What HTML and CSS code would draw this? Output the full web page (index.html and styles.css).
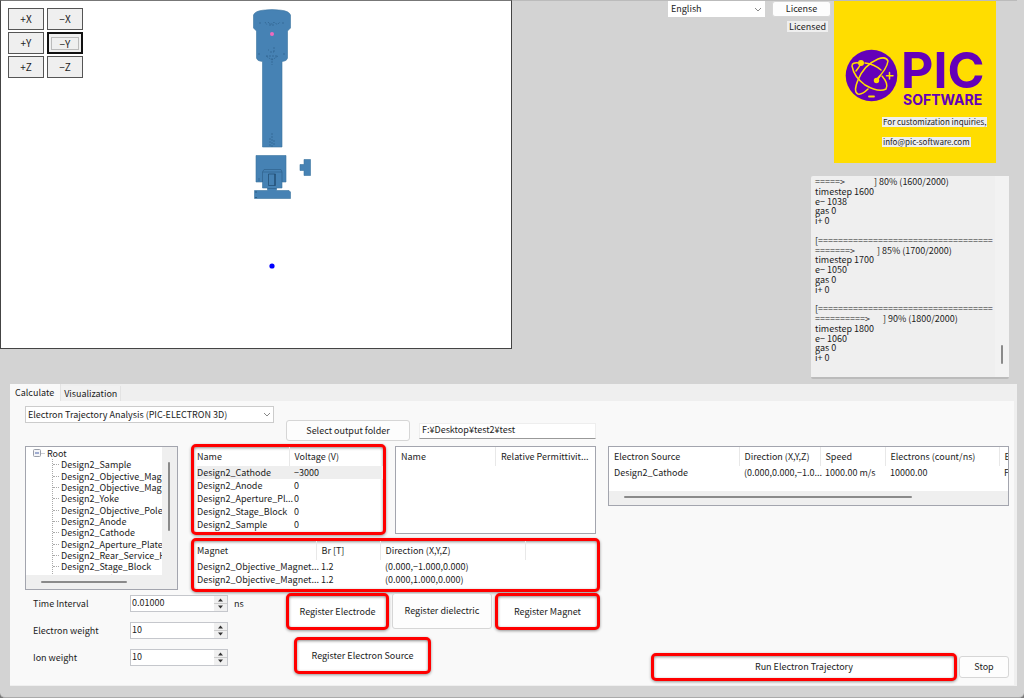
FILE: index.html
```html
<!DOCTYPE html>
<html lang="en">
<head>
<meta charset="utf-8">
<title>PIC Software</title>
<link rel="stylesheet" href="styles.css">
</head>
<body>
<main class="window">
  <section class="top">
    <div class="viewer">
      <svg class="scene" viewBox="1 1 510 347" role="img" aria-label="Model view">
        <g fill="#4682b4" stroke="#3b739f" stroke-width=".6">
          <path d="M253.500 15 Q255 11 263 10.200 Q272 9 281 10.200 Q289 11 290.500 15 V28 L287.500 31 V58 Q287 61 282 61.500 V147 H262.500 V61.500 Q257 61 256.500 58 V31 L253.500 28 Z"/>
          <path d="M256 155.500 H286 V182 H282 V188 H276.500 V190.500 H289 L290.500 192 V198.500 H254.500 V190.500 H267.500 V188 H262.500 V182 H256 Z"/>
          <path d="M304 159.500 H310.500 V175.500 H304 V170.500 H300 V164.500 H304 Z"/>
        </g>
        <g fill="none" stroke="#2f628c" stroke-width=".7">
          <path d="M259 23 h2 M265 22 l2 3 M268 22 q3 4 6 0 q3 4 6 0 M283 22 v2 M269 25 h5" stroke-dasharray="2 1"/>
          <path d="M266 56 H278 L272 60 Z M272 58 V65 M274 47 V53 M270 52 h4 M259 53 v3 M284 53 v3 M268 50 h1" stroke-dasharray="2 1"/>
          <path d="M272 133 V147 M270 138 V146 M274 140 V146" stroke-dasharray="2 1"/>
          <path d="M262.500 182 V172 L264 169.500 H281 L282 172 V182 M262.500 172 H282 M267.500 188.500 H276.500 M259 178 v3"/>
          <path d="M268.500 174 H275.500 V185.500 H268.500 Z M274.500 174 V185.500 M255 192 h2 M255 197.500 h2" stroke="#204b70"/>
        </g>
        <circle cx="272" cy="34" r="2" fill="#ef69bd"/>
        <circle cx="272" cy="266" r="2.600" fill="#0000ff"/>
      </svg>
      <div class="axes">
        <button>+X</button><button>−X</button>
        <button>+Y</button><button class="focused"><span>−Y</span></button>
        <button>+Z</button><button>−Z</button>
      </div>
    </div>
    <div class="side">
      <div class="header">
        <div class="select language"><select aria-label="Language"><option>English</option></select><svg viewBox="0 0 8 5"><path d="M1 1 L4 4 L7 1"/></svg></div>
        <div class="license"><button class="btn">License</button><span class="tag">Licensed</span></div>
        <div class="brand">
          <svg class="logo" viewBox="834 1 162 112" role="img" aria-label="PIC Software">
            <circle cx="871.500" cy="75.500" r="25.800" fill="#6400b9"/>
            <g fill="none" stroke="#ffdd00" stroke-width="1.500" stroke-linecap="round">
              <path d="M859 63 Q852 62 852 66 Q854 77 865 85 Q879 93 886 89 Q889 84 882 76"/>
              <path d="M865 63 Q874 64 881 70"/>
              <path d="M876 80 Q887 69 888 61 Q886 56 878 59 Q864 65 858 80 Q853 92 858 94 Q862 95 868 89"/>
              <path d="M856 71 Q860 66 861 63 M880 76 Q878 79 876 81"/>
              <path d="M889.500 72.500 V79 M886.500 75.800 H893"/>
              <path d="M869 96.500 H874" stroke-width="1.800"/>
            </g>
            <circle cx="861" cy="63" r="3" fill="#ffdd00"/><circle cx="876.500" cy="80.500" r="2.700" fill="#ffdd00"/>
            <text class="logo-name" x="901" y="88">PIC</text>
            <text class="logo-sub" x="903" y="105">SOFTWARE</text>
          </svg>
          <div class="contact"><span>For customization inquiries,</span><span>info@pic-software.com</span></div>
        </div>
      </div>
      <div class="log">
        <div class="lines">
          <div>=====&gt;<span class="percent p80">] 80% (1600/2000)</span></div><div>timestep 1600</div><div>e− 1038</div><div>gas 0</div><div>i+ 0</div><div></div>
          <div>[===================================</div><div>=======&gt;<span class="percent p85">] 85% (1700/2000)</span></div><div>timestep 1700</div><div>e− 1050</div><div>gas 0</div><div>i+ 0</div><div></div>
          <div>[===================================</div><div>==========&gt;<span class="percent p90">] 90% (1800/2000)</span></div><div>timestep 1800</div><div>e− 1060</div><div>gas 0</div><div>i+ 0</div>
        </div>
        <div class="log-bar"><i></i></div>
      </div>
    </div>
  </section>

  <section class="panel">
    <nav class="tabs"><button class="tab active">Calculate</button><button class="tab">Visualization</button></nav>
    <div class="page">
      <div class="setup">
        <div class="mode">
          <div class="select analysis"><select aria-label="Analysis"><option>Electron Trajectory Analysis (PIC-ELECTRON 3D)</option></select><svg viewBox="0 0 8 5"><path d="M1 1 L4 4 L7 1"/></svg></div>
          <div class="output"><button class="btn">Select output folder</button><input type="text" aria-label="Output folder" value="F:¥Desktop¥test2¥test"></div>
        </div>
        <div class="model">
          <div class="tree">
            <div class="tree-view">
              <div class="root"><svg viewBox="0 0 12 9"><rect x=".5" y=".5" width="7" height="7" rx="1"/><path d="M2 4 H6" class="minus"/><path d="M8.500 4.500 H12" stroke-dasharray="1 1"/></svg>Root</div>
              <ul>
                <li>Design2_Sample</li><li>Design2_Objective_Magnet1</li><li>Design2_Objective_Magnet2</li><li>Design2_Yoke</li><li>Design2_Objective_Polep</li><li>Design2_Anode</li><li>Design2_Cathode</li><li>Design2_Aperture_Plate</li><li>Design2_Rear_Service_Ho</li><li>Design2_Stage_Block</li><li>Design2_Side_Detector_I</li>
              </ul>
            </div>
            <div class="tree-v"><i></i></div>
            <div class="tree-h"><i></i></div>
          </div>
          <div class="lists">
            <div class="materials">
              <div class="mark electrodes">
                <table>
                  <colgroup><col class="c-name"><col></colgroup>
                  <thead><tr><th>Name</th><th>Voltage (V)</th></tr></thead>
                  <tbody>
                    <tr class="selected"><td>Design2_Cathode</td><td>−3000</td></tr>
                    <tr><td>Design2_Anode</td><td>0</td></tr>
                    <tr><td>Design2_Aperture_Pl...</td><td>0</td></tr>
                    <tr><td>Design2_Stage_Block</td><td>0</td></tr>
                    <tr><td>Design2_Sample</td><td>0</td></tr>
                  </tbody>
                </table>
              </div>
              <div class="box dielectrics">
                <table>
                  <thead><tr><th>Name</th><th>Relative Permittivit...</th></tr></thead>
                </table>
              </div>
            </div>
            <div class="mark magnets">
              <table>
                <colgroup><col class="c-magnet"><col class="c-br"><col class="c-dir"><col></colgroup>
                <thead><tr><th>Magnet</th><th>Br [T]</th><th>Direction (X,Y,Z)</th><th></th></tr></thead>
                <tbody>
                  <tr><td>Design2_Objective_Magnet...</td><td>1.2</td><td>(0.000,−1.000,0.000)</td><td></td></tr>
                  <tr><td>Design2_Objective_Magnet...</td><td>1.2</td><td>(0.000,1.000,0.000)</td><td></td></tr>
                </tbody>
              </table>
            </div>
          </div>
        </div>
        <div class="controls">
          <form class="fields">
            <label for="interval">Time Interval</label><div class="spin"><input id="interval" type="text" value="0.01000"><svg viewBox="0 0 13 14"><path class="line" d="M0 7 H13"/><path d="M4 5 L6.500 2 L9 5 Z M4 9 L6.500 12 L9 9 Z"/></svg></div><span>ns</span>
            <label for="electron">Electron weight</label><div class="spin"><input id="electron" type="text" value="10"><svg viewBox="0 0 13 14"><path class="line" d="M0 7 H13"/><path d="M4 5 L6.500 2 L9 5 Z M4 9 L6.500 12 L9 9 Z"/></svg></div><span></span>
            <label for="ion">Ion weight</label><div class="spin"><input id="ion" type="text" value="10"><svg viewBox="0 0 13 14"><path class="line" d="M0 7 H13"/><path d="M4 5 L6.500 2 L9 5 Z M4 9 L6.500 12 L9 9 Z"/></svg></div><span></span>
          </form>
          <div class="actions">
            <div class="row">
              <div class="mark"><button class="btn">Register Electrode</button></div>
              <button class="btn plain">Register dielectric</button>
              <div class="mark"><button class="btn">Register Magnet</button></div>
            </div>
            <div class="row second"><div class="mark"><button class="btn">Register Electron Source</button></div></div>
          </div>
        </div>
      </div>
      <div class="source">
        <div class="box sources">
          <table>
            <colgroup><col class="s-name"><col class="s-dir"><col class="s-speed"><col class="s-count"><col></colgroup>
            <thead><tr><th>Electron Source</th><th>Direction (X,Y,Z)</th><th>Speed</th><th>Electrons (count/ns)</th><th>E</th></tr></thead>
            <tbody><tr><td>Design2_Cathode</td><td>(0.000,0.000,−1.0...</td><td>1000.00 m/s</td><td>10000.00</td><td>F</td></tr></tbody>
          </table>
          <div class="source-bar"><i></i></div>
        </div>
        <div class="run"><div class="mark"><button class="btn">Run Electron Trajectory</button></div><button class="btn stop">Stop</button></div>
      </div>
    </div>
  </section>
</main>
</body>
</html>
```
FILE: styles.css
```css
* { box-sizing: border-box; }
body { margin: 0; background: #777; color: #1c1c1c; }
body, button, input, select, table { font-family: "Noto Sans CJK JP", "Liberation Sans", sans-serif; font-size: 9px; line-height: 13px; }
button, input, select { margin: 0; padding: 0; color: inherit; }
svg { display: block; }
i { display: block; background: #8a8a8a; border-radius: 1px; }

.window { min-height: 100vh; display: flex; flex-direction: column; gap: 5px; padding: 0 7px 11px 0; background: #d3d3d3; border-bottom: 1px solid #aaa; border-radius: 0 0 5px 5px; }
.top { display: grid; grid-template-columns: 512fr 505fr; align-items: start; }

.viewer { position: relative; background: #fff; border: 1px solid #444; border-top-color: #777; }
.scene { width: 100%; height: auto; }
.axes { position: absolute; left: 7px; top: 7px; display: grid; grid-template-columns: 36px 36px; grid-auto-rows: 22px; gap: 2px 3px; }
.axes button { background: #efefef; border: 1px solid #555; padding: 0 2px 1px; font-size: 10px; }
.axes .focused { border: 2px solid #111; padding: 2px; }
.axes .focused span { display: block; border: 1px solid #bbb; line-height: 11px; }

.side { display: flex; flex-direction: column; align-items: flex-end; gap: 13px; padding-right: 8px; border-top: 1px solid #bbb; }
.header { display: flex; align-items: flex-start; padding-right: 13px; }
.select { position: relative; }
.select select { width: 100%; height: 100%; appearance: none; background: #fff; border: 1px solid #ccc; border-radius: 0; padding: 0 2px 1px; line-height: 13px; }
.select svg { position: absolute; right: 3px; top: 6px; width: 8px; height: 5px; fill: none; stroke: #888; pointer-events: none; }
.language { width: 97px; height: 16px; margin-right: 7px; }
.language select { border-color: #fff; }
.btn { background: #fdfdfd; border: 1px solid #d6d6d6; border-radius: 3px; padding-bottom: 1px; }
.license { width: 59px; margin-right: 3px; display: flex; flex-direction: column; align-items: flex-end; gap: 4px; }
.license .btn { width: 100%; height: 16px; }
.tag { background: #efefef; padding: 0 2px; line-height: 11px; margin-right: 3px; }
.brand { width: 162px; height: 162px; background: #ffdd00; }
.logo { width: 100%; height: auto; }
.logo-name { font: 700 50px Inter, sans-serif; fill: #6400b9; }
.logo-sub { font: 700 14px Inter, sans-serif; fill: #6400b9; }
.contact { display: flex; flex-direction: column; align-items: flex-start; gap: 10px; padding: 4px 0 0 48px; }
.contact span { background: #efefef; font-size: 8px; line-height: 10px; padding: 0 1px; white-space: nowrap; }

.log { width: 198px; height: 203px; display: flex; background: #efefef; border-bottom: 2px solid #bbb; border-radius: 2px; }
.lines { flex: 1; height: 187px; display: grid; grid-template-rows: repeat(19, minmax(0, 1fr)); padding: 1px 0 0 4px; line-height: 10px; white-space: nowrap; }
.lines > div { display: flex; }
.p80 { margin-left: 29px; }
.p85 { margin-left: 22px; }
.p90 { margin-left: 13px; }
.log-bar { width: 14px; background: #f2f2f2; padding: 169px 5px 0 6px; }
.log-bar i { width: 2px; height: 19px; }

.panel { flex: 1; display: flex; flex-direction: column; margin-left: 10px; background: #efefef; padding: 0 3px 1px 0; }
.tabs { display: flex; align-items: flex-end; height: 17px; }
.tab { height: 15px; border: 0; border-right: 1px solid #e3e3e3; background: #f1f1f1; padding: 0 3px; }
.tab.active { height: 17px; background: #f9f9f9; padding: 0 6px 1px 5px; }
.page { flex: 1; display: flex; gap: 8px; background: #f9f9f9; padding: 5px 5px 4px 15px; }
.setup { flex: 575 1 0; min-width: 0; }
.source { flex: 401 1 0; min-width: 0; display: flex; flex-direction: column; justify-content: space-between; padding-top: 40px; }

.mode { display: flex; justify-content: space-between; height: 35px; padding-right: 4px; }
.analysis { width: 249px; height: 17px; }
.output { display: flex; align-items: center; gap: 9px; align-self: flex-end; }
.output .btn { width: 124px; height: 21px; }
.output input { width: 177px; height: 16px; background: #fff; border: 1px solid #eee; border-bottom-color: #999; padding: 0 2px 2px; }

.model { display: grid; grid-template-columns: 153px 1fr; gap: 13px; margin-top: 3px; }
.tree { display: grid; grid-template: 1fr 14px / 1fr 15px; margin-top: 2px; height: 144px; border: 1px solid #a3a5ae; background: #efefef; overflow: hidden; }
.tree-view { background: #fff; height: 128px; overflow: hidden; white-space: nowrap; padding: 0 0 0 7px; }
.root { display: flex; align-items: center; gap: 2px; height: 12px; }
.root svg { width: 12px; height: 9px; fill: #f4f5f8; stroke: #9a9ea8; }
.root .minus { stroke: #4a63a8; }
.tree ul { list-style: none; margin: 0 0 0 19px; padding: 0; height: 125px; display: flex; flex-direction: column; border-left: 1px dotted #aaa; }
.tree li { flex: 1; display: flex; align-items: center; gap: 2px; min-height: 0; line-height: 11px; }
.tree li::before { content: ""; flex: none; width: 6px; border-top: 1px dotted #aaa; }
.tree-v { padding: 15px 6px 0; }
.tree-v i { width: 2px; height: 69px; }
.tree-h { padding: 6px 0 0 15px; }
.tree-h i { width: 86px; height: 2px; }

.lists { display: flex; flex-direction: column; gap: 3px; min-width: 0; }
.materials { display: flex; gap: 9px; }
.mark { border: 3px solid #f00; border-radius: 5px; background: #fff; box-shadow: 0 1px 3px rgba(0,0,0,.4), inset 0 1px 3px rgba(0,0,0,.45); }
.electrodes { flex: 0 0 195px; height: 91px; padding: 0 0 0 3px; overflow: hidden; }
.box { border: 1px solid #a3a5ae; background: #fff; overflow: hidden; }
.dielectrics { flex: 1; margin: 2px 4px 1px 0; }
.magnets { height: 54px; padding: 0 0 0 3px; overflow: hidden; }
table { width: 100%; table-layout: fixed; border-collapse: collapse; }
th, td { text-align: left; font-weight: 400; white-space: nowrap; padding: 0; line-height: 13px; }
td + td, th + th { padding-left: 5px; }
th { height: 19px; border-right: 1px solid #e8e8e8; }
th:last-child { border-right: 0; }
.selected { background: #eee; }
.c-name { width: 92px; }
.c-magnet { width: 119px; }
.c-br { width: 64px; }
.c-dir { width: 145px; }
.dielectrics th { padding-left: 5px; }

.controls { display: flex; justify-content: space-between; margin-top: 1px; }
.fields { display: grid; grid-template-columns: 91px 98px 16px; grid-auto-rows: 17px; gap: 10px 6px; align-items: center; align-content: start; padding: 2px 0 0 8px; }
.spin { display: flex; height: 17px; background: #fff; border: 1px solid #c5c7cc; }
.spin input { flex: 1; min-width: 0; border: 0; background: none; padding: 0 1px 2px; }
.spin svg { width: 13px; height: 15px; background: #f0f0f0; fill: #333; }
.spin .line { stroke: #ccc; }
.actions { display: flex; flex-direction: column; gap: 7px; }
.row { display: flex; gap: 3px; }
.mark .btn { width: 100%; height: 100%; border: 0; background: none; display: block; }
.row .mark { width: 105px; height: 37px; }
.row .mark:first-child { width: 103px; }
.plain { width: 100px; height: 36px; }
.row.second { padding-left: 8px; }
.second .mark:first-child { width: 137px; }

.sources { height: 60px; display: flex; flex-direction: column; justify-content: space-between; padding-left: 5px; }
.s-name { width: 125px; }
.s-dir { width: 81px; }
.s-speed { width: 65px; }
.s-count { width: 114px; }
.source-bar { height: 14px; background: #efefef; margin-left: -5px; padding: 5px 96px 0 15px; }
.source-bar i { height: 2px; }
.run { display: flex; align-items: center; gap: 2px; padding-left: 43px; }
.run .mark { flex: 1; height: 28px; }
.stop { width: 50px; height: 22px; }
```
